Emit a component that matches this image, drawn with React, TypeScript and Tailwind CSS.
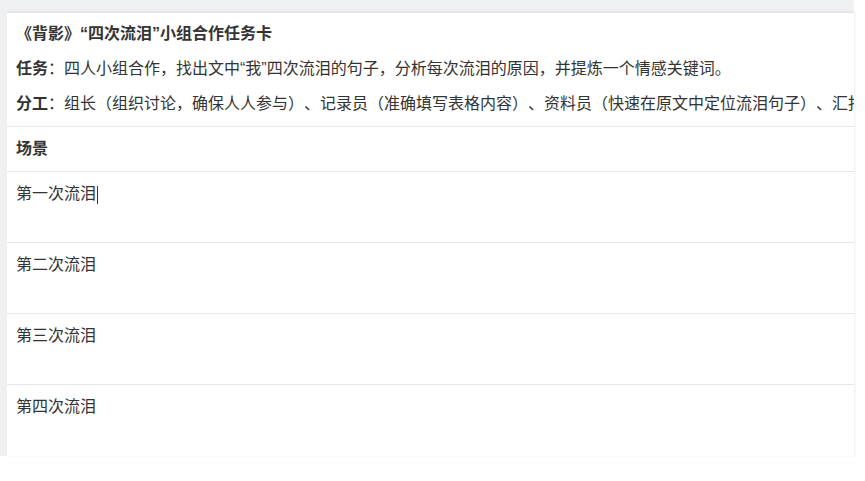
import React from 'react';

const font = { fontFamily: '"Liberation Sans", "Noto Sans CJK SC", sans-serif' };

const rows = ['第一次流泪', '第二次流泪', '第三次流泪', '第四次流泪'];

export default function App() {
  return (
    <div className="w-[865px] h-[481px] bg-white text-[#333] overflow-hidden [text-spacing-trim:space-all]" style={font}>
      <div className="w-[854px] h-[456px] bg-[#eef0f2] pl-[7px] pt-[12px]">
        <div className="h-full bg-white border-t border-[#e3e5e8] shadow-[1px_0_2px_rgba(0,0,0,0.08)] overflow-hidden">
          {/* 任务卡说明 */}
          <div className="px-[9px] pt-[3px] pb-[5px] border-b border-[#e5e7ea] text-[16px] leading-[35px] whitespace-nowrap">
            <div className="font-bold">《背影》“四次流泪”小组合作任务卡</div>
            <div>
              <span className="font-bold">任务</span>：四人小组合作，找出文中“我”四次流泪的句子，分析每次流泪的原因，并提炼一个情感关键词。
            </div>
            <div>
              <span className="font-bold">分工</span>：组长（组织讨论，确保人人参与）、记录员（准确填写表格内容）、资料员（快速在原文中定位流泪句子）、汇报员（整理结论并向全班汇报）
            </div>
          </div>
          <div className="h-[45px] px-[9px] flex items-center border-b border-[#e5e7ea] text-[16px] font-bold">
            场景
          </div>
          {rows.map((r, i) => (
            <div
              key={r}
              className={`h-[71px] px-[9px] pt-[10px] text-[16px] ${i < rows.length - 1 ? 'border-b border-[#e5e7ea]' : ''}`}
            >
              {r}
              {i === 0 && <span className="inline-block w-px h-[18px] bg-[#333] align-middle ml-[1px]" />}
            </div>
          ))}
        </div>
      </div>
    </div>
  );
}
